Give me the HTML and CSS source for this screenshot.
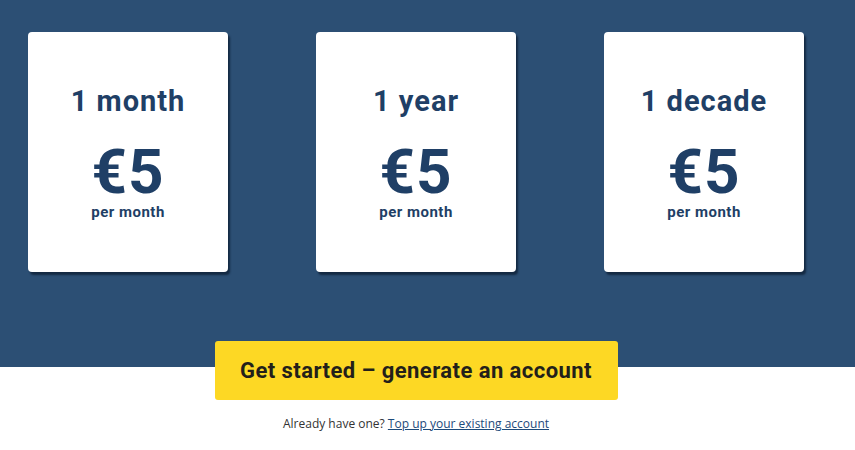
FILE: index.html
```html
<!DOCTYPE html>
<html>
<head>
<meta charset="utf-8">
<link rel="stylesheet" href="styles.css">
</head>
<body>
<section class="hero">
  <div class="cards">
    <div class="card">
      <div class="term">1 month</div>
      <div class="price">€5</div>
      <div class="per">per month</div>
    </div>
    <div class="card">
      <div class="term">1 year</div>
      <div class="price">€5</div>
      <div class="per">per month</div>
    </div>
    <div class="card">
      <div class="term">1 decade</div>
      <div class="price">€5</div>
      <div class="per">per month</div>
    </div>
  </div>
</section>
<section class="cta">
  <a class="btn">Get started – generate an account</a>
  <p class="already">Already have one? <a class="link">Top up your existing account</a></p>
</section>
</body>
</html>
```
FILE: styles.css
```css
html, body {
  margin: 0;
  padding: 0;
  background: #ffffff;
  font-family: Roboto, "Liberation Sans", sans-serif;
}
.hero {
  background: #2c4f74;
  height: 367px;
  box-sizing: border-box;
  padding-top: 32px;
}
.cards {
  width: 776px;
  margin-left: 28px;
  display: flex;
  justify-content: space-between;
}
.card {
  width: 200px;
  height: 240px;
  background: #ffffff;
  border-radius: 4px;
  box-shadow: 2px 3px 2px rgba(10, 25, 45, 0.7);
  box-sizing: border-box;
  padding-top: 52px;
  text-align: center;
  color: #1f3f66;
}
.term {
  font-size: 29px;
  font-weight: 700;
  line-height: 34px;
  letter-spacing: 1px;
}
.price {
  font-size: 62px;
  font-weight: 700;
  line-height: 54px;
  margin-top: 27px;
  letter-spacing: 1px;
}
.per {
  font-size: 15px;
  font-weight: 700;
  line-height: 18px;
  margin-top: 4px;
  letter-spacing: 0.5px;
}
.cta {
  width: 832px;
  display: flex;
  flex-direction: column;
  align-items: center;
}
.btn {
  display: flex;
  align-items: center;
  justify-content: center;
  width: 403px;
  height: 59px;
  margin-top: -26px;
  background: #fdd824;
  border-radius: 3px;
  color: #231f1a;
  font-size: 22px;
  font-weight: 700;
  letter-spacing: 0.45px;
}
.already {
  margin: 15px 0 0;
  font-size: 12px;
  color: #333333;
  font-family: "Open Sans", sans-serif;
}
.link {
  color: #1d4a7a;
  text-decoration: underline;
}
```
